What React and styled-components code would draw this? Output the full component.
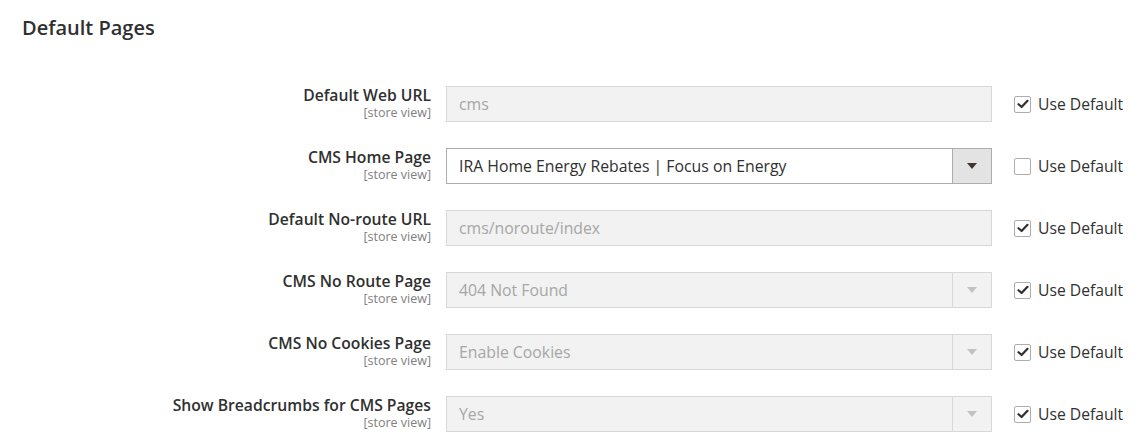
import React from "react";
import styled, { createGlobalStyle } from "styled-components";

const rows = [
  { label: "Default Web URL", type: "input", value: "cms", disabled: true, checked: true },
  {
    label: "CMS Home Page",
    type: "select",
    value: "IRA Home Energy Rebates | Focus on Energy",
    disabled: false,
    checked: false,
  },
  { label: "Default No-route URL", type: "input", value: "cms/noroute/index", disabled: true, checked: true },
  { label: "CMS No Route Page", type: "select", value: "404 Not Found", disabled: true, checked: true },
  { label: "CMS No Cookies Page", type: "select", value: "Enable Cookies", disabled: true, checked: true },
  { label: "Show Breadcrumbs for CMS Pages", type: "select", value: "Yes", disabled: true, checked: true },
];

const App = () => {
  return (
    <StPage>
      <GlobalStyle />
      <StTitle>Default Pages</StTitle>
      <StForm>
        {rows.map((row) => (
          <StRow key={row.label}>
            {/* -------------- Label -------------- */}
            <StLabel>
              <StLabelText>{row.label}</StLabelText>
              <StScope>[store view]</StScope>
            </StLabel>
            {/* -------------- Field -------------- */}
            <StField $disabled={row.disabled}>
              <StValue $disabled={row.disabled}>{row.value}</StValue>
              {row.type === "select" && (
                <StArrowBox $disabled={row.disabled}>
                  <StArrow $disabled={row.disabled} />
                </StArrowBox>
              )}
            </StField>
            {/* -------------- Use Default -------------- */}
            <StUseDefault>
              <StCheckbox>
                {row.checked && (
                  <svg width="12" height="10" viewBox="0 0 12 10">
                    <path
                      d="M1.5 5.2 L4.6 8 L10.5 1.8"
                      fill="none"
                      stroke="#303030"
                      strokeWidth="2.2"
                      strokeLinecap="round"
                      strokeLinejoin="round"
                    />
                  </svg>
                )}
              </StCheckbox>
              Use Default
            </StUseDefault>
          </StRow>
        ))}
      </StForm>
    </StPage>
  );
};

export default App;

const GlobalStyle = createGlobalStyle`
  body {
    margin: 0;
    background: #ffffff;
    font-family: "Open Sans", "Liberation Sans", sans-serif;
    color: #303030;
  }
`;

const StPage = styled.div`
  width: 1141px;
  height: 445px;
  overflow: hidden;
`;

const StTitle = styled.h2`
  margin: 0;
  padding: 16px 0 0 22px;
  font-size: 20px;
  font-weight: 600;
  line-height: 24px;
  color: #303030;
`;

const StForm = styled.div`
  display: flex;
  flex-direction: column;
  gap: 26px;
  padding-top: 46px;
`;

const StRow = styled.div`
  display: flex;
  align-items: flex-start;
`;

const StLabel = styled.div`
  width: 431px;
  text-align: right;
  display: flex;
  flex-direction: column;
  align-items: flex-end;
`;

const StLabelText = styled.span`
  font-size: 15.7px;
  font-weight: 600;
  line-height: 18px;
  color: #303030;
`;

const StScope = styled.span`
  margin-top: 2px;
  font-size: 12.5px;
  line-height: 14px;
  color: #808080;
`;

const StField = styled.div`
  box-sizing: border-box;
  margin-left: 15px;
  width: 546px;
  height: 36px;
  display: flex;
  align-items: stretch;
  border: 1px solid ${(p) => (p.$disabled ? "#d8d8d8" : "#adadad")};
  background: ${(p) => (p.$disabled ? "#f2f2f2" : "#ffffff")};
`;

const StValue = styled.div`
  flex: 1;
  display: flex;
  align-items: center;
  padding-left: 12px;
  font-size: 15.8px;
  color: ${(p) => (p.$disabled ? "#a6a6a6" : "#303030")};
`;

const StArrowBox = styled.div`
  width: 38px;
  display: flex;
  align-items: center;
  justify-content: center;
  border-left: 1px solid ${(p) => (p.$disabled ? "#d8d8d8" : "#adadad")};
  background: ${(p) => (p.$disabled ? "#f2f2f2" : "#e3e3e3")};
`;

const StArrow = styled.span`
  width: 0;
  height: 0;
  border-left: 5px solid transparent;
  border-right: 5px solid transparent;
  border-top: 6px solid ${(p) => (p.$disabled ? "#c2c2c2" : "#41362f")};
`;

const StUseDefault = styled.label`
  margin-left: 22px;
  height: 36px;
  display: flex;
  align-items: center;
  gap: 7px;
  font-size: 15.7px;
  color: #303030;
  white-space: nowrap;
`;

const StCheckbox = styled.span`
  box-sizing: border-box;
  width: 17px;
  height: 17px;
  border: 1px solid #adadad;
  border-radius: 2px;
  background: #ffffff;
  display: flex;
  align-items: center;
  justify-content: center;
`;
